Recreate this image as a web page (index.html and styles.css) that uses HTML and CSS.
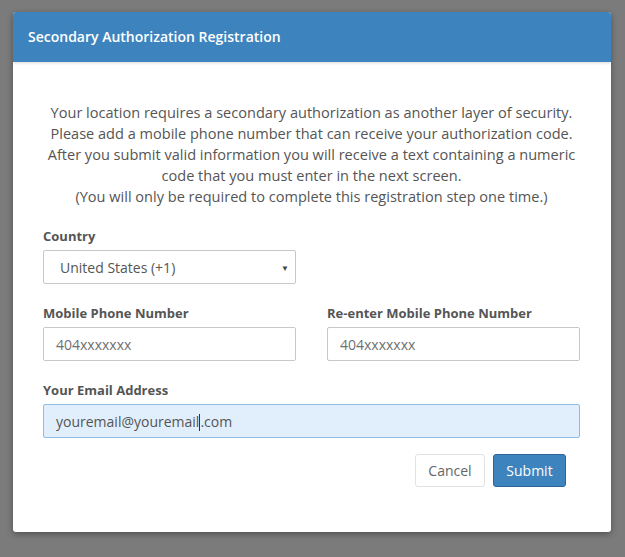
FILE: index.html
```html
<!DOCTYPE html>
<html>
<head>
<meta charset="utf-8">
<link rel="stylesheet" href="styles.css">
</head>
<body>
<div class="modal">
  <div class="modal-header">
    <h4 class="modal-title">Secondary Authorization Registration</h4>
  </div>
  <div class="modal-body">
    <p class="intro">Your location requires a secondary authorization as another layer of security.<br>
    Please add a mobile phone number that can receive your authorization code.<br>
    After you submit valid information you will receive a text containing a numeric<br>
    code that you must enter in the next screen.<br>
    (You will only be required to complete this registration step one time.)</p>

    <div class="row">
      <div class="group">
        <label class="label">Country</label>
        <div class="select">
          <span>United States (+1)</span>
          <span class="caret">▼</span>
        </div>
      </div>
      <div class="group"></div>
    </div>

    <div class="row">
      <div class="group">
        <label class="label">Mobile Phone Number</label>
        <div class="input">404xxxxxxx</div>
      </div>
      <div class="group">
        <label class="label">Re-enter Mobile Phone Number</label>
        <div class="input">404xxxxxxx</div>
      </div>
    </div>

    <div class="group full">
      <label class="label">Your Email Address</label>
      <div class="input focus">youremail@youremail<span class="cursor"></span>.com</div>
    </div>

    <div class="actions">
      <button class="btn btn-default">Cancel</button>
      <button class="btn btn-primary">Submit</button>
    </div>
  </div>
</div>
</body>
</html>
```
FILE: styles.css
```css
html, body {
  margin: 0;
  padding: 0;
  background: #7b7b7b;
  font-family: "Open Sans", "Noto Sans", sans-serif;
  color: #555;
}
body {
  padding: 12px 0 0 13px;
  height: 557px;
  box-sizing: border-box;
}
.modal {
  width: 598px;
  height: 520px;
  background: #fff;
  border-radius: 3px;
  box-shadow: 0 2px 6px rgba(0,0,0,0.35);
  overflow: hidden;
}
.modal-header {
  height: 50px;
  background: #3d84be;
  display: flex;
  align-items: center;
  padding-left: 15px;
  box-shadow: 0 1px 3px rgba(0,0,0,0.15);
  position: relative;
}
.modal-title {
  margin: 0;
  color: #fff;
  font-size: 14px;
  font-weight: 600;
  line-height: 20px;
  padding-bottom: 1px;
}
.modal-body {
  padding: 40px 31px 0 30px;
}
.intro {
  margin: 0 0 19px;
  text-align: center;
  font-size: 14.55px;
  line-height: 21px;
  color: #555;
}
.row {
  display: flex;
  gap: 31px;
  margin-bottom: 19px;
}
.group {
  flex: 1;
  display: flex;
  flex-direction: column;
}
.group.full {
  margin-bottom: 16px;
}
.label {
  font-size: 13px;
  font-weight: 700;
  line-height: 20px;
  margin-bottom: 4px;
  color: #555;
}
.select, .input {
  height: 34px;
  box-sizing: border-box;
  border: 1px solid #c8c8c8;
  border-radius: 2px;
  font-size: 14px;
  display: flex;
  align-items: center;
}
.select {
  padding: 0 6px 0 16px;
  justify-content: space-between;
  color: #555;
}
.caret {
  font-size: 8px;
  color: #444;
}
.input {
  padding: 0 12px;
  color: #6f6f6f;
}
.input.focus {
  background: #e1effd;
  border-color: #8fbde3;
  color: #555;
}
.cursor {
  display: inline-block;
  width: 1px;
  height: 17px;
  background: #333;
  margin-top: 2px;
}
.actions {
  display: flex;
  justify-content: flex-end;
  gap: 8px;
  padding-right: 14px;
}
.btn {
  height: 33px;
  box-sizing: border-box;
  border-radius: 3px;
  font-family: "Open Sans", "Noto Sans", sans-serif;
  font-size: 14px;
  padding: 0;
  cursor: pointer;
}
.btn-default {
  background: #fff;
  border: 1px solid #e2e2e2;
  color: #666;
  width: 70px;
}
.btn-primary {
  background: #3d84be;
  border: 1px solid #2c6594;
  color: #fff;
  width: 73px;
}
```
